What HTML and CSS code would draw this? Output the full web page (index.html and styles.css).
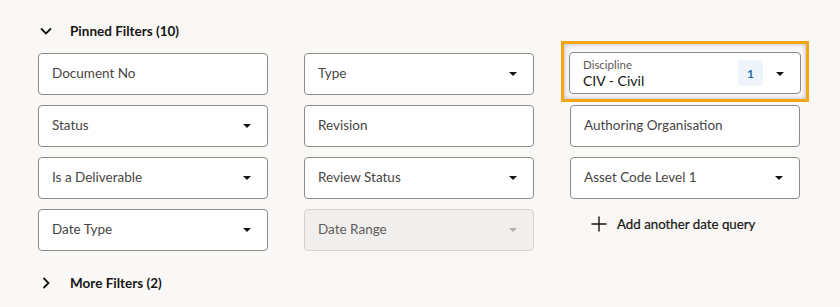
FILE: index.html
```html
<!DOCTYPE html>
<html lang="en">
<head>
    <meta charset="UTF-8">
    <meta name="viewport" content="width=device-width, initial-scale=1.0">
    <title>Filters</title>
    <link rel="stylesheet" href="styles.css">
</head>
<body>
<div class="filters">
    <div class="section-toggle">
        <span class="chevron">
            <svg width="12" height="8" viewBox="0 0 12 8"><path d="M1 1.5 L6 6.5 L11 1.5" fill="none" stroke="#161513" stroke-width="1.8"/></svg>
        </span>
        <span class="section-title">Pinned Filters (10)</span>
    </div>

    <div class="filter-grid">
        <div class="field">Document No</div>
        <div class="field select">Type<span class="caret"></span></div>
        <div class="highlight">
            <div class="field select filled">
                <div class="filled-text">
                    <span class="small-label">Discipline</span>
                    <span class="value">CIV - Civil</span>
                </div>
                <span class="count">1</span>
                <span class="caret"></span>
            </div>
        </div>

        <div class="field select">Status<span class="caret"></span></div>
        <div class="field">Revision</div>
        <div class="field">Authoring Organisation</div>

        <div class="field select">Is a Deliverable<span class="caret"></span></div>
        <div class="field select">Review Status<span class="caret"></span></div>
        <div class="field select">Asset Code Level 1<span class="caret"></span></div>

        <div class="field select">Date Type<span class="caret"></span></div>
        <div class="field select disabled">Date Range<span class="caret"></span></div>
        <div class="add-query">
            <svg width="16" height="16" viewBox="0 0 16 16"><path d="M8 0.5 V15.5 M0.5 8 H15.5" stroke="#161513" stroke-width="1.4"/></svg>
            <span>Add another date query</span>
        </div>
    </div>

    <div class="section-toggle more">
        <span class="chevron">
            <svg width="8" height="12" viewBox="0 0 8 12"><path d="M1.5 1 L6.5 6 L1.5 11" fill="none" stroke="#161513" stroke-width="1.8"/></svg>
        </span>
        <span class="section-title">More Filters (2)</span>
    </div>
</div>
</body>
</html>
```

FILE: styles.css
```css
body {
    margin: 0;
    background-color: #f9f8f6;
    font-family: Lato, "Noto Sans", sans-serif;
    color: #161513;
}

.filters {
    padding: 19px 0 0 38px;
    width: 762px;
}

.section-toggle {
    display: flex;
    align-items: center;
    height: 24px;
}

.section-toggle.more {
    margin-top: 20px;
}

.chevron {
    width: 16px;
    display: flex;
    justify-content: center;
    margin-right: 16px;
}

.section-title {
    font-size: 13.5px;
    font-weight: 700;
}

.filter-grid {
    margin-top: 10px;
    display: grid;
    grid-template-columns: repeat(3, 230px);
    grid-auto-rows: 42px;
    column-gap: 36px;
    row-gap: 10px;
}

.field {
    box-sizing: border-box;
    height: 42px;
    border: 1px solid #8e8b87;
    border-radius: 4px;
    background-color: #fff;
    display: flex;
    align-items: center;
    padding: 0 16px 2px 13px;
    font-size: 13.5px;
    color: #474543;
}

.caret {
    margin-left: auto;
    width: 0;
    height: 0;
    border-left: 4px solid transparent;
    border-right: 4px solid transparent;
    border-top: 4px solid #161513;
    margin-top: 1px;
}

.field.disabled {
    background-color: #f1efed;
    border-color: #d6d3cf;
    color: #5f5c59;
}

.field.disabled .caret {
    border-top-color: #b3b0ac;
}

.highlight {
    margin: -12px -9px -7px -9px;
    padding: 8px 5px 4px 5px;
    border: 3px solid #f2a515;
    box-shadow: inset 0 0 5px rgba(0, 0, 0, 0.28);
}

.field.filled {
    padding-bottom: 0;
}

.filled-text {
    display: flex;
    flex-direction: column;
    line-height: 15px;
}

.small-label {
    font-size: 11.5px;
    color: #5b5956;
}

.value {
    font-size: 14px;
    color: #161513;
    line-height: 17px;
}

.count {
    margin-left: auto;
    margin-right: 13px;
    width: 25px;
    height: 26px;
    border-radius: 4px;
    background-color: #eef4f9;
    color: #1e6ea3;
    font-size: 12px;
    font-weight: 700;
    display: flex;
    align-items: center;
    justify-content: center;
}

.filled .caret {
    margin-left: 0;
}

.add-query {
    display: flex;
    align-items: center;
    height: 30px;
    padding-left: 21px;
    gap: 10px;
    font-size: 13.3px;
    color: #161513;
    -webkit-text-stroke: 0.2px #161513;
}
```
